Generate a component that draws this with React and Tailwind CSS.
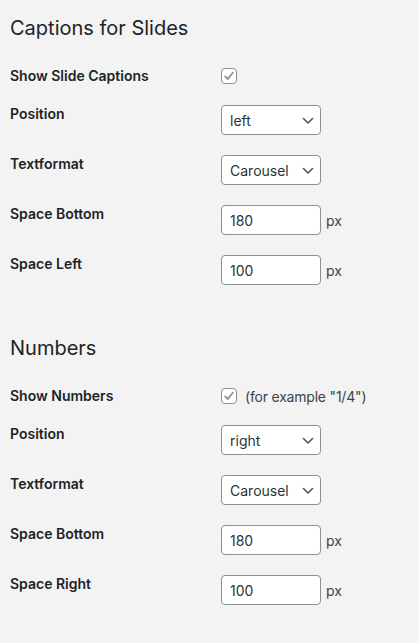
import { useState } from 'react';

const Chevron = () => (
  <svg width="12" height="8" viewBox="0 0 12 8" className="absolute right-[7px] top-[12px] pointer-events-none">
    <path d="M1.5 1.5 L6 6 L10.5 1.5" fill="none" stroke="#50575e" strokeWidth="1.6" strokeLinecap="round" strokeLinejoin="round" />
  </svg>
);

const Checkbox = ({ checked, onChange }) => (
  <button
    type="button"
    onClick={onChange}
    className="w-4 h-4 rounded-[4px] border border-[#8c8f94] bg-white flex items-center justify-center shrink-0"
  >
    {checked && (
      <svg width="12" height="12" viewBox="0 0 12 12">
        <path d="M2.2 6.4 L4.8 9 L9.8 2.8" fill="none" stroke="#8c8f94" strokeWidth="1.8" strokeLinecap="round" strokeLinejoin="round" />
      </svg>
    )}
  </button>
);

const SelectBox = ({ value, options, onChange }) => (
  <div className="relative w-[100px] h-[30px]">
    <select
      value={value}
      onChange={(e) => onChange(e.target.value)}
      className="appearance-none w-full h-full rounded-[4px] border border-[#8c8f94] bg-white pl-[8px] pr-6 text-[14px] text-[#2c3338] outline-none"
    >
      {options.map((o) => (
        <option key={o} value={o}>{o}</option>
      ))}
    </select>
    <Chevron />
  </div>
);

const PxInput = ({ value, onChange }) => (
  <div className="flex items-center">
    <input
      type="text"
      value={value}
      onChange={(e) => onChange(e.target.value)}
      className="w-[100px] h-[30px] rounded-[4px] border border-[#8c8f94] bg-white px-[8px] text-[14px] text-[#2c3338] outline-none"
    />
    <span className="ml-[5px] text-[14px] text-[#3c434a]">px</span>
  </div>
);

const Label = ({ children }) => (
  <div className="w-[211px] shrink-0 text-[14px] font-semibold leading-[18px] text-[#1d2327]">{children}</div>
);

const Section = ({ title, checkLabel, note, sideLabel, data, set }) => (
  <div>
    <h2 className="text-[20px] leading-[28px] text-[#1d2327]">{title}</h2>
    <div className="mt-[19px] h-[30px] flex items-center">
      <Label>{checkLabel}</Label>
      <Checkbox checked={data.show} onChange={() => set({ ...data, show: !data.show })} />
      {note && <span className="ml-[8px] text-[14px] tracking-[-0.2px] text-[#3c434a]">{note}</span>}
    </div>
    <div className="mt-[14px] flex items-start">
      <Label>Position</Label>
      <SelectBox value={data.position} options={['left', 'right', 'center']} onChange={(v) => set({ ...data, position: v })} />
    </div>
    <div className="mt-[20px] flex items-start">
      <Label>Textformat</Label>
      <SelectBox value={data.format} options={['Carousel', 'Plain']} onChange={(v) => set({ ...data, format: v })} />
    </div>
    <div className="mt-[20px] flex items-start">
      <Label>Space Bottom</Label>
      <PxInput value={data.bottom} onChange={(v) => set({ ...data, bottom: v })} />
    </div>
    <div className="mt-[20px] flex items-start">
      <Label>{sideLabel}</Label>
      <PxInput value={data.side} onChange={(v) => set({ ...data, side: v })} />
    </div>
  </div>
);

const App = () => {
  const [captions, setCaptions] = useState({ show: true, position: 'left', format: 'Carousel', bottom: '180', side: '100' });
  const [numbers, setNumbers] = useState({ show: true, position: 'right', format: 'Carousel', bottom: '180', side: '100' });

  return (
    <div className="min-h-[643px] bg-[#f3f3f3] pt-[14px] pl-[10px] font-['Inter','Noto_Sans',sans-serif]">
      <Section title="Captions for Slides" checkLabel="Show Slide Captions" sideLabel="Space Left" data={captions} set={setCaptions} />
      <div className="h-[49px]" />
      <Section title="Numbers" checkLabel="Show Numbers" note={'(for example "1/4")'} sideLabel="Space Right" data={numbers} set={setNumbers} />
    </div>
  );
};

export default App;
